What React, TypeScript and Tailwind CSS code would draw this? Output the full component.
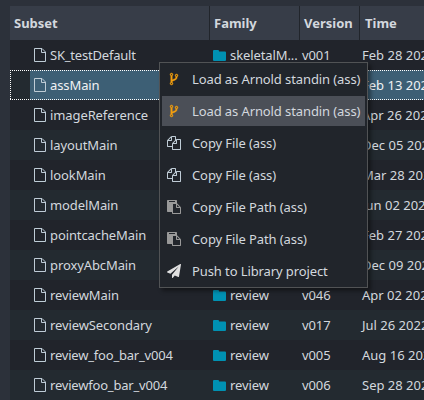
const FILES =
  'M1696 384q40 0 68 28t28 68v1216q0 40-28 68t-68 28h-960q-40 0-68-28t-28-68v-288h-544q-40 0-68-28t-28-68v-672q0-40 20-88t48-76l408-408q28-28 76-48t88-20h416q40 0 68 28t28 68v328q68-40 128-40h416zm-544 213l-299 299h299v-299zm-640-384l-299 299h299v-299zm196 647l316-316v-416h-384v416q0 40-28 68t-68 28h-416v640h512v-256q0-40 20-88t48-76zm956 804v-1152h-384v416q0 40-28 68t-68 28h-416v640h896z';
const PASTE =
  'M768 1664h896v-640h-416q-40 0-68-28t-28-68v-416h-384v1152zm256-1440v-64q0-13-9.5-22.5t-22.5-9.5h-704q-13 0-22.5 9.5t-9.5 22.5v64q0 13 9.5 22.5t22.5 9.5h704q13 0 22.5-9.5t9.5-22.5zm256 672h299l-299-299v299zm512 128v672q0 40-28 68t-68 28h-960q-40 0-68-28t-28-68v-160h-544q-40 0-68-28t-28-68v-1344q0-40 28-68t68-28h1088q40 0 68 28t28 68v328q21 13 36 28l408 408q28 28 48 76t20 88z';
const FORK =
  'M672 1472q0-40-28-68t-68-28-68 28-28 68 28 68 68 28 68-28 28-68zm0-1152q0-40-28-68t-68-28-68 28-28 68 28 68 68 28 68-28 28-68zm640 128q0-40-28-68t-68-28-68 28-28 68 28 68 68 28 68-28 28-68zm96 0q0 52-26 96.5t-70 69.5q-2 287-226 414-67 38-203 81-128 40-169.5 71t-41.5 100v26q44 25 70 69.5t26 96.5q0 80-56 136t-136 56-136-56-56-136q0-52 26-96.5t70-69.5v-820q-44-25-70-69.5t-26-96.5q0-80 56-136t136-56 136 56 56 136q0 52-26 96.5t-70 69.5v497q54-26 154-57 55-17 87.5-29.5t70.5-31 59-39.5 40.5-51 28-69.5 8.5-91.5q-44-25-70-69.5t-26-96.5q0-80 56-136t136-56 136 56 56 136z';
const PLANE =
  'M1764 11q33 24 27 64l-256 1536q-5 29-32 45-14 8-31 8-11 0-24-5l-453-185-242 295q-18 23-49 23-13 0-22-4-19-7-30.5-23.5t-11.5-36.5v-349l864-1059-1069 925-395-162q-37-14-40-55-2-40 32-59l1664-960q15-9 32-9 20 0 36 11z';

type Row = { name: string; family?: string; version?: string; time: string; tight?: boolean };

const rows: Row[] = [
  { name: 'SK_testDefault', family: 'skeletalM...', version: 'v001', time: 'Feb 28 2023', tight: true },
  { name: 'assMain', time: 'Feb 13 2023' },
  { name: 'imageReference', time: 'Apr 26 2022' },
  { name: 'layoutMain', time: 'Dec 05 2022' },
  { name: 'lookMain', time: 'Mar 28 2022' },
  { name: 'modelMain', time: 'Jun 02 2022' },
  { name: 'pointcacheMain', time: 'Feb 27 2023' },
  { name: 'proxyAbcMain', time: 'Dec 09 2022' },
  { name: 'reviewMain', family: 'review', version: 'v046', time: 'Apr 02 2022' },
  { name: 'reviewSecondary', family: 'review', version: 'v017', time: 'Jul 26 2022' },
  { name: 'review_foo_bar_v004', family: 'review', version: 'v005', time: 'Aug 16 2022', tight: true },
  { name: 'reviewfoo_bar_v004', family: 'review', version: 'v006', time: 'Sep 28 2022', tight: true },
];

const menu = [
  { label: 'Load as Arnold standin (ass)', path: FORK, color: 'text-[#f5a00f]' },
  { label: 'Load as Arnold standin (ass)', path: FORK, color: 'text-[#f5a00f]', active: true },
  { label: 'Copy File (ass)', path: FILES, color: 'text-[#bfccd6]' },
  { label: 'Copy File (ass)', path: FILES, color: 'text-[#bfccd6]' },
  { label: 'Copy File Path (ass)', path: PASTE, color: 'text-[#999999]' },
  { label: 'Copy File Path (ass)', path: PASTE, color: 'text-[#999999]' },
  { label: 'Push to Library project', path: PLANE, color: 'text-[#e0e0e0]' },
];

function FileIcon() {
  return (
    <svg width="12" height="14" viewBox="0 0 12 14" fill="none" stroke="#bfccd6" className="shrink-0">
      <path d="M.5 .5H8L11.5 4V13.5H.5ZM7.5 .5V4.5H11.5" />
    </svg>
  );
}

function FolderIcon() {
  return (
    <svg width="13" height="11" viewBox="0 0 13 11" fill="#0091b2" className="shrink-0">
      <path d="M0 1Q0 0 1 0H5Q6 0 6 1V1.5H12Q13 1.5 13 2.5V10Q13 11 12 11H1Q0 11 0 10Z" />
    </svg>
  );
}

export default function App() {
  return (
    <div className="relative h-[400px] w-[424px] overflow-hidden whitespace-nowrap bg-[#2c313a] pl-[10px] pt-[6px] font-['Noto_Sans',sans-serif] text-[13px] leading-[18px] tracking-[-0.1px] text-[#d3d8de]">
      <div className="flex h-[34px] items-center bg-[#373d48] font-bold tracking-normal">
        <div className="flex h-full w-[200px] items-center border-r border-[#21252b] pl-1">Subset</div>
        <div className="flex h-full w-[90px] items-center border-r border-[#21252b] pl-1">Family</div>
        <div className="flex h-full w-[60px] items-center border-r border-[#21252b] pl-1">Version</div>
        <div className="pl-[5px]">Time</div>
      </div>
      {rows.map((r, i) => (
        <div
          key={r.name}
          className={`relative flex h-[30px] items-center ${i % 2 ? 'bg-[#232a30]' : 'bg-[#21242b]'}`}
        >
          <div className="h-full w-5 shrink-0" />
          <div className={`flex h-full flex-1 items-center ${i === 1 ? 'bg-[#3d5f75] text-[#f0f2f4]' : ''}`}>
            <div className="flex w-[180px] shrink-0 items-center gap-1 pl-1">
              <FileIcon />
              <span className={r.tight ? 'tracking-[-0.2px]' : ''}>{r.name}</span>
            </div>
            <div className="flex w-[90px] shrink-0 items-center gap-1 pl-[3px]">
              {r.family && (
                <>
                  <FolderIcon />
                  <span>{r.family}</span>
                </>
              )}
            </div>
            <div className="w-[60px] shrink-0 pl-[2px]">{r.version}</div>
            <div className="w-[64px] shrink-0 overflow-hidden pl-[2px] tracking-normal">{r.time}</div>
          </div>
          {i === 1 && (
            <svg className="absolute inset-0" width="414" height="30" fill="none" stroke="#fff" strokeDasharray="1 1">
              <path d="M0 .5H414M0 29.5H414M.5 0V30" />
            </svg>
          )}
        </div>
      ))}
      <div className="absolute left-[159px] top-[62px] flex h-[226px] w-[209px] flex-col gap-[2px] border border-[#515355] bg-[#21252b] px-[2px] pt-px shadow-[3px_3px_4px_rgba(0,0,0,0.4)]">
        {menu.map((m, i) => (
          <div
            key={i}
            className={`flex h-[30px] shrink-0 items-center ${m.active ? 'bg-[#4b4f57]' : ''}`}
          >
            <div className="flex w-[30px] shrink-0 pl-[5px]">
              <svg
                width="14"
                height="14"
                viewBox="0 0 1792 1792"
                fill="currentColor"
                stroke="currentColor"
                strokeWidth={m.path === FORK ? 50 : 0}
                className={`shrink-0 ${m.color}`}
              >
                <path d={m.path} />
              </svg>
            </div>
            <span>{m.label}</span>
          </div>
        ))}
      </div>
    </div>
  );
}
